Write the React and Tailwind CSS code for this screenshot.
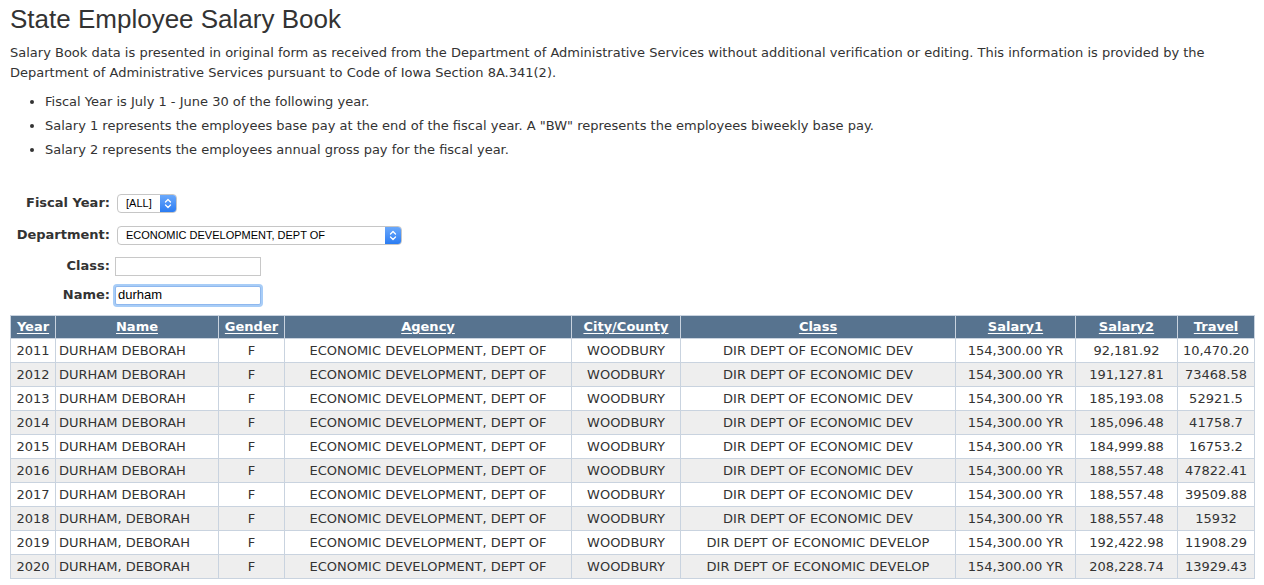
import React from 'react'

const rows = [
  ['2011', 'DURHAM DEBORAH', 'DIR DEPT OF ECONOMIC DEV', '92,181.92', '10,470.20'],
  ['2012', 'DURHAM DEBORAH', 'DIR DEPT OF ECONOMIC DEV', '191,127.81', '73468.58'],
  ['2013', 'DURHAM DEBORAH', 'DIR DEPT OF ECONOMIC DEV', '185,193.08', '52921.5'],
  ['2014', 'DURHAM DEBORAH', 'DIR DEPT OF ECONOMIC DEV', '185,096.48', '41758.7'],
  ['2015', 'DURHAM DEBORAH', 'DIR DEPT OF ECONOMIC DEV', '184,999.88', '16753.2'],
  ['2016', 'DURHAM DEBORAH', 'DIR DEPT OF ECONOMIC DEV', '188,557.48', '47822.41'],
  ['2017', 'DURHAM DEBORAH', 'DIR DEPT OF ECONOMIC DEV', '188,557.48', '39509.88'],
  ['2018', 'DURHAM, DEBORAH', 'DIR DEPT OF ECONOMIC DEV', '188,557.48', '15932'],
  ['2019', 'DURHAM, DEBORAH', 'DIR DEPT OF ECONOMIC DEVELOP', '192,422.98', '11908.29'],
  ['2020', 'DURHAM, DEBORAH', 'DIR DEPT OF ECONOMIC DEVELOP', '208,228.74', '13929.43'],
]

const headers = [
  ['Year', 'w-[45px]'],
  ['Name', 'w-[163px]'],
  ['Gender', 'w-[66px]'],
  ['Agency', 'w-[287px]'],
  ['City/County', 'w-[109px]'],
  ['Class', 'w-[275px]'],
  ['Salary1', 'w-[120px]'],
  ['Salary2', 'w-[102px]'],
  ['Travel', 'w-[77px]'],
]

function SelectArrows() {
  return (
    <div className="w-[16px] self-stretch bg-gradient-to-b from-[#6aa8fb] to-[#2a7cf2] rounded-r-[3px] flex items-center justify-center">
      <svg width="8" height="11" viewBox="0 0 8 11" fill="none" stroke="white" strokeWidth="1.3" strokeLinecap="round" strokeLinejoin="round">
        <path d="M1.5 4L4 1.5L6.5 4" />
        <path d="M1.5 7L4 9.5L6.5 7" />
      </svg>
    </div>
  )
}

function App() {
  return (
    <div className="min-h-screen bg-white px-[10px] text-[#333] font-['DejaVu_Sans',Verdana,sans-serif]">
      <h1 className="pt-[3px] text-[26px] leading-[32px] font-['Liberation_Sans',Arial,sans-serif] text-[#333]">
        State Employee Salary Book
      </h1>
      <p className="mt-[8px] text-[13px] leading-[20px]">
        Salary Book data is presented in original form as received from the Department of Administrative Services without additional verification or editing. This information is provided by the Department of Administrative Services pursuant to Code of Iowa Section 8A.341(2).
      </p>
      <ul className="mt-[9px] pl-[35px] list-disc text-[13px] leading-[20px]">
        <li className="mb-[4px]">Fiscal Year is July 1 - June 30 of the following year.</li>
        <li className="mb-[4px]">Salary 1 represents the employees base pay at the end of the fiscal year. A "BW" represents the employees biweekly base pay.</li>
        <li className="mb-[4px]">Salary 2 represents the employees annual gross pay for the fiscal year.</li>
      </ul>

      <div className="mt-[33px] text-[13px] font-bold">
        <div className="flex items-center h-[20px]">
          <label className="w-[100px] text-right">Fiscal Year:</label>
          <div className="ml-[7px] flex items-stretch h-[19px] w-[60px] border border-[#c6c6c6] rounded-[4px] bg-white font-normal">
            <span className="flex-1 pl-[8px] text-[11px] leading-[17px] text-black font-['Liberation_Sans',Arial,sans-serif]">[ALL]</span>
            <SelectArrows />
          </div>
        </div>
        <div className="flex items-center h-[20px] mt-[12px]">
          <label className="w-[100px] text-right">Department:</label>
          <div className="ml-[7px] flex items-stretch h-[19px] w-[285px] border border-[#c6c6c6] rounded-[4px] bg-white font-normal">
            <span className="flex-1 pl-[8px] text-[11px] leading-[17px] text-black font-['Liberation_Sans',Arial,sans-serif]">ECONOMIC DEVELOPMENT, DEPT OF</span>
            <SelectArrows />
          </div>
        </div>
        <div className="flex items-center h-[20px] mt-[11px]">
          <label className="w-[100px] text-right">Class:</label>
          <input className="ml-[5px] h-[19px] w-[146px] border border-[#c8c8c8] bg-white outline-none" />
        </div>
        <div className="flex items-center h-[20px] mt-[9px]">
          <label className="w-[100px] text-right">Name:</label>
          <input
            defaultValue="durham"
            className="ml-[5px] h-[19px] w-[146px] border border-[#8fb8ee] bg-white px-[2px] text-[13px] font-normal text-black font-['Liberation_Sans',Arial,sans-serif] outline-none shadow-[0_0_0_2px_#a8cdf7] rounded-[2px]"
          />
        </div>
      </div>

      <table className="mt-[10px] w-[1244px] table-fixed border-collapse text-[13px]">
        <thead>
          <tr className="bg-[#57738f] h-[23px]">
            {headers.map(([h, w]) => (
              <th key={h} className={`${w} border border-[#c9d3df] text-white font-bold text-center underline underline-offset-2 leading-[20px] p-0`}>
                {h}
              </th>
            ))}
          </tr>
        </thead>
        <tbody>
          {rows.map((r, i) => (
            <tr key={r[0]} className={`h-[24px] ${i % 2 === 1 ? 'bg-[#eeeeee]' : 'bg-white'}`}>
              <td className="border border-[#c9d3df] text-center p-0">{r[0]}</td>
              <td className="border border-[#c9d3df] text-left pl-[3px] py-0">{r[1]}</td>
              <td className="border border-[#c9d3df] text-center p-0">F</td>
              <td className="border border-[#c9d3df] text-center p-0">ECONOMIC DEVELOPMENT, DEPT OF</td>
              <td className="border border-[#c9d3df] text-center p-0">WOODBURY</td>
              <td className="border border-[#c9d3df] text-center p-0">{r[2]}</td>
              <td className="border border-[#c9d3df] text-center p-0">154,300.00 YR</td>
              <td className="border border-[#c9d3df] text-center p-0">{r[3]}</td>
              <td className="border border-[#c9d3df] text-center p-0">{r[4]}</td>
            </tr>
          ))}
        </tbody>
      </table>
    </div>
  )
}

export default App
